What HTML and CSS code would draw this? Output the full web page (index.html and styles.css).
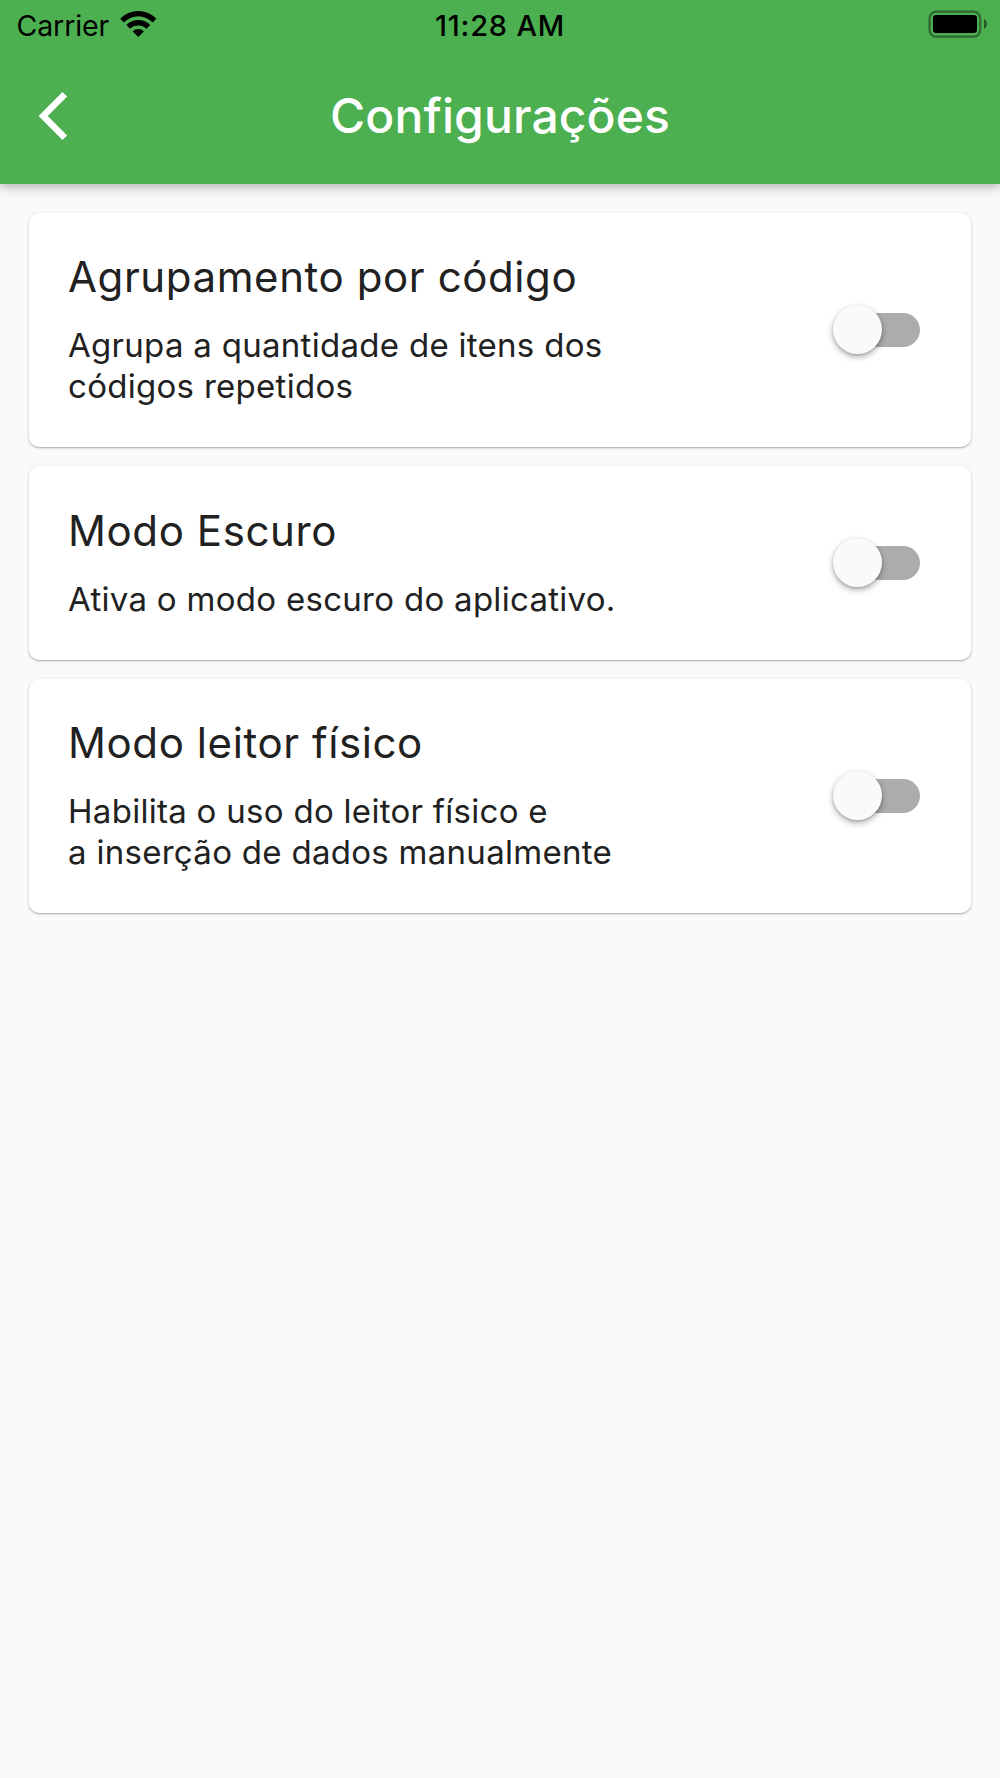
FILE: index.html
```html
<!DOCTYPE html>
<html lang="pt-BR">
<head>
  <meta charset="utf-8">
  <title>Configurações</title>
  <link rel="stylesheet" href="styles.css">
</head>
<body>
  <header class="app-bar">
    <div class="status-bar">
      <div class="status-left">
        <span class="carrier">Carrier</span>
        <svg class="wifi" width="38" height="28" viewBox="0 0 38 28" aria-hidden="true">
          <path d="M1.2 8.5A25.6 25.6 0 0 1 37.4 8.5L33.8 12.4A20.4 20.4 0 0 0 4.8 12.4Z"/>
          <path d="M7.4 15A16.8 16.8 0 0 1 31.2 15L27.6 18.8A11.8 11.8 0 0 0 11 18.8Z"/>
          <path d="M13.7 21.4A7.8 7.8 0 0 1 24.9 21.4L19.3 27Z"/>
        </svg>
      </div>
      <span class="time">11:28 AM</span>
      <div class="status-right">
        <svg class="battery" width="60" height="28" viewBox="0 0 60 28" aria-hidden="true">
          <rect class="battery-frame" x="1.6" y="1.6" width="50.6" height="25" rx="6.4"/>
          <rect x="5" y="5" width="44" height="18" rx="3"/>
          <path class="battery-cap" d="M56 9C60 10.6 60 17.2 56 18.8Z"/>
        </svg>
      </div>
    </div>
    <div class="toolbar">
      <svg class="back" width="30" height="50" viewBox="0 0 30 50" aria-hidden="true">
        <path d="M26.8 3.2L5.2 25L26.8 46.8"/>
      </svg>
      <h1 class="title">Configurações</h1>
    </div>
  </header>
  <main class="settings">
    <section class="card">
      <div class="card-text">
        <h2 class="card-title">Agrupamento por código</h2>
        <p class="card-sub">Agrupa a quantidade de itens dos<br>códigos repetidos</p>
      </div>
      <div class="switch"><span class="thumb"></span></div>
    </section>
    <section class="card">
      <div class="card-text">
        <h2 class="card-title">Modo Escuro</h2>
        <p class="card-sub">Ativa o modo escuro do aplicativo.</p>
      </div>
      <div class="switch"><span class="thumb"></span></div>
    </section>
    <section class="card">
      <div class="card-text">
        <h2 class="card-title">Modo leitor físico</h2>
        <p class="card-sub">Habilita o uso do leitor físico e<br>a inserção de dados manualmente</p>
      </div>
      <div class="switch"><span class="thumb"></span></div>
    </section>
  </main>
</body>
</html>
```
FILE: styles.css
```css
* {
  box-sizing: border-box;
}

body {
  margin: 0;
  min-height: 1778px;
  background: #fafafa;
  color: #212121;
  font-family: Inter, "Liberation Sans", sans-serif;
}

.app-bar {
  height: 183.5px;
  background: #4caf50;
  box-shadow: 0 5px 11px rgba(0, 0, 0, 0.18), 0 2px 5px rgba(0, 0, 0, 0.1);
}

.status-bar {
  display: grid;
  grid-template-columns: 1fr auto 1fr;
  height: 50px;
  line-height: 52px;
  color: #000;
}

.status-left {
  display: flex;
  padding-left: 16.5px;
}

.carrier {
  width: 102.5px;
  font-size: 28.5px;
  letter-spacing: -0.1px;
}

.wifi {
  margin-top: 10px;
}

.time {
  font-size: 29px;
  font-weight: 500;
  letter-spacing: 0.8px;
}

.status-right {
  display: flex;
  justify-content: flex-end;
  padding: 10px 12px 0 0;
}

.battery-frame {
  fill: none;
  stroke: #000;
  stroke-opacity: 0.4;
  stroke-width: 2.3;
}

.battery-cap {
  fill-opacity: 0.5;
}

.toolbar {
  display: grid;
  grid-template-columns: 1fr auto 1fr;
  align-items: center;
  height: 132px;
}

.back {
  margin-left: 38px;
  fill: none;
  stroke: #fff;
  stroke-width: 6.6;
}

.title {
  margin: 0;
  color: #fff;
  font-size: 48px;
  font-weight: 500;
  letter-spacing: 0.11px;
  line-height: 60px;
}

.settings {
  display: flex;
  flex-direction: column;
  gap: 19px;
  padding: 29.3px 29px 0;
}

.card {
  display: flex;
  align-items: center;
  justify-content: space-between;
  padding: 39.6px 51px 39.9px 39px;
  border-radius: 10px;
  background: #fff;
  box-shadow: 0 1px 3px rgba(0, 0, 0, 0.22), 0 1px 1px rgba(0, 0, 0, 0.14);
}

.card-title {
  margin: 0 0 23px;
  font-size: 42px;
  font-weight: 400;
  letter-spacing: 0.6px;
  line-height: 50px;
}

.card-sub {
  margin: 0;
  font-size: 33px;
  letter-spacing: 0.29px;
  line-height: 41px;
}

.switch {
  display: flex;
  align-items: center;
  width: 84px;
  height: 34px;
  border-radius: 17px;
  background: #acacac;
}

.thumb {
  width: 49px;
  height: 49px;
  border-radius: 50%;
  margin-left: -3px;
  flex: none;
  background: #fafafa;
  box-shadow: 0 3px 6px rgba(0, 0, 0, 0.3), 0 1px 3px rgba(0, 0, 0, 0.16);
}
```
